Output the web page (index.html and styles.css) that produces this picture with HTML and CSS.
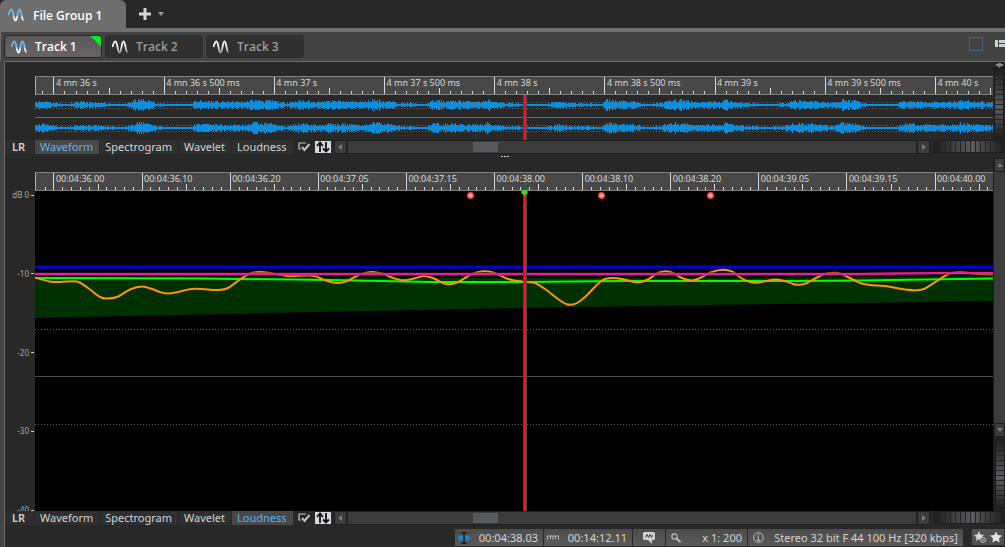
FILE: index.html
```html
<!DOCTYPE html>
<html lang="en">
<head>
    <meta charset="UTF-8">
    <meta name="viewport" content="width=device-width, initial-scale=1.0">
    <title>File Group 1</title>
    <link rel="stylesheet" href="styles.css">
</head>
<body>
    <!-- shared icons -->
    <svg class="icon-defs" aria-hidden="true">
        <linearGradient id="waveActive" gradientUnits="userSpaceOnUse" x1="0" y1="0" x2="0" y2="14">
            <stop offset="0.5" stop-color="#6cbcf0"/>
            <stop offset="0.7" stop-color="#ffffff"/>
        </linearGradient>
        <linearGradient id="waveIdle" gradientUnits="userSpaceOnUse" x1="0" y1="0" x2="0" y2="14">
            <stop offset="0.4" stop-color="#f4f4f4"/>
            <stop offset="1" stop-color="#909090"/>
        </linearGradient>
        <symbol id="icon-wave" viewBox="0 0 16 14">
            <path d="M0.5 7C1.500 3 2.500 1.500 3.500 1.500C5.500 1.500 5.500 12.500 7.500 12.500C9.500 12.500 9.500 1.500 11.500 1.500C13.500 1.500 13.500 12 15.500 12" fill="none" stroke-width="1.8"/>
        </symbol>
        <symbol id="icon-check" viewBox="0 0 14 12">
            <path d="M9 2H2V8H4" fill="none" stroke="#c4c4c4" stroke-width="1.2"/>
            <path d="M5 6L7.500 9L12.500 3" fill="none" stroke="#c4c4c4" stroke-width="2"/>
        </symbol>
        <symbol id="icon-swap" viewBox="0 0 16 12">
            <path d="M5 11V2M2 5L5 1.500L8 5" fill="none" stroke="#111" stroke-width="1.8"/>
            <path d="M11 1V10M8 7.500L11 10.500L14 7.500" fill="none" stroke="#111" stroke-width="1.8"/>
        </symbol>
    </svg>

    <header class="group-bar">
        <button class="group-tab" type="button">
            <svg class="wave-icon"><use href="#icon-wave"/></svg>
            File Group 1
        </button>
        <button class="add-button" type="button" aria-label="Add">
            <svg width="12" height="12" viewBox="0 0 12 12"><path d="M6 0V12M0 6H12" stroke="#d4d4d4" stroke-width="3"/></svg>
        </button>
        <button class="add-menu" type="button" aria-label="Add menu">
            <svg width="6" height="4" viewBox="0 0 6 4"><path d="M0 0H6L3 4Z" fill="#9a9a9a"/></svg>
        </button>
    </header>

    <nav class="track-bar">
        <button class="track-tab active" type="button"><svg class="wave-icon"><use href="#icon-wave"/></svg>Track 1</button>
        <button class="track-tab" type="button"><svg class="wave-icon"><use href="#icon-wave"/></svg>Track 2</button>
        <button class="track-tab" type="button"><svg class="wave-icon"><use href="#icon-wave"/></svg>Track 3</button>
        <div class="track-tools">
            <button class="square-button" type="button" aria-label="Maximize"></button>
            <button type="button" aria-label="Layout">
                <svg width="10" height="8" viewBox="0 0 10 8"><path d="M0 0H3V7H0ZM4 0H10V3H4ZM4 4H10V7H4Z" fill="#ccd0d6"/></svg>
            </button>
        </div>
    </nav>

    <main class="editor">
        <section class="overview">
            <div class="overview-view">
                <div class="ruler ruler-seconds" id="overviewRuler"></div>
                <div class="wave">
                    <svg class="plot" viewBox="0 0 958 45" preserveAspectRatio="none">
                        <path class="wave-guide" d="M0 7.500H958M0 13.500H958M0 30.500H958M0 36.500H958"/>
                        <path class="wave-divider" d="M0 22.500H958"/>
                        <path class="wave-line" id="waveLeft"/>
                        <path class="wave-line" id="waveRight"/>
                    </svg>
                    <div class="playhead"></div>
                </div>
            </div>
            <div class="side">
                <button class="side-star" type="button" aria-label="Options">
                    <svg width="7" height="5" viewBox="0 0 7 5"><path d="M2 0H5V1H7V3H5L3.500 5L2 3H0V1H2Z" fill="#8c8c8c"/></svg>
                </button>
                <input class="wheel-v" type="range" aria-label="Overview vertical zoom">
            </div>
        </section>

        <div class="view-bar">
            <span class="channels">LR</span>
            <button class="view-tab active" type="button">Waveform</button>
            <button class="view-tab" type="button">Spectrogram</button>
            <button class="view-tab" type="button">Wavelet</button>
            <button class="view-tab" type="button">Loudness</button>
            <button class="check-button" type="button" aria-label="Options"><svg width="14" height="12"><use href="#icon-check"/></svg></button>
            <button class="swap-button" type="button" aria-label="Swap"><svg width="16" height="12"><use href="#icon-swap"/></svg></button>
            <button class="scroll-button" type="button" aria-label="Scroll left"><svg width="4" height="6" viewBox="0 0 4 6"><path d="M4 0V6L0 3Z"/></svg></button>
            <div class="scroll-track"><div class="scroll-thumb"></div></div>
            <button class="scroll-button" type="button" aria-label="Scroll right"><svg width="4" height="6" viewBox="0 0 4 6"><path d="M0 0V6L4 3Z"/></svg></button>
            <input class="wheel-h" type="range" aria-label="Overview zoom">
        </div>

        <div class="splitter"><i></i><i></i><i></i></div>

        <section class="detail">
            <div class="axis">
                <span>dB 0</span>
                <span>-10</span>
                <span>-20</span>
                <span>-30</span>
                <span>-40</span>
            </div>
            <div class="detail-view">
                <div class="ruler ruler-frames" id="detailRuler"></div>
                <div class="chart">
                    <svg class="plot" viewBox="0 0 958 320" preserveAspectRatio="none">
                        <path class="range-fill" d="M0 86L165 86L295 86.500L490 87H700L958 85V110L635 114.500L490 117L305 120.500L0 127Z"/>
                        <path class="grid-dots" d="M0 138.500H958M0 233.500H958"/>
                        <path class="grid-line" d="M0 185.500H958"/>
                        <path class="line-glow-blue" d="M0 76H958"/>
                        <path class="line-blue" d="M0 76H958"/>
                        <path class="line-green" d="M0 87L165 87.500L295 89L395 91H490L585 90H765L825 89.500L958 87.500"/>
                        <path class="line-orange" id="loudness"/>
                        <path class="line-glow-pink" d="M0 83H825L900 82H958"/>
                        <path class="line-pink" d="M0 83H825L900 82H958"/>
                    </svg>
                    <div class="playhead"></div>
                    <svg class="play-marker" viewBox="0 0 7 7"><path d="M0.5 0H6.500V4H5L3.500 6.500L2 4H0.500Z" fill="#3fdc1c"/></svg>
                    <i class="marker" style="left: 45.4%"></i>
                    <i class="marker" style="left: 59.1%"></i>
                    <i class="marker" style="left: 70.5%"></i>
                </div>
            </div>
            <div class="side side-scroll">
                <button class="scroll-button-v" type="button" aria-label="Scroll up"><svg width="6" height="4" viewBox="0 0 6 4"><path d="M0 4H6L3 0Z"/></svg></button>
                <div class="scroll-track-v"></div>
                <button class="scroll-button-v" type="button" aria-label="Scroll down"><svg width="6" height="4" viewBox="0 0 6 4"><path d="M0 0H6L3 4Z"/></svg></button>
                <input class="wheel-v" type="range" aria-label="Vertical zoom">
            </div>
        </section>

        <div class="view-bar">
            <span class="channels">LR</span>
            <button class="view-tab" type="button">Waveform</button>
            <button class="view-tab" type="button">Spectrogram</button>
            <button class="view-tab" type="button">Wavelet</button>
            <button class="view-tab active" type="button">Loudness</button>
            <button class="check-button" type="button" aria-label="Options"><svg width="14" height="12"><use href="#icon-check"/></svg></button>
            <button class="swap-button" type="button" aria-label="Swap"><svg width="16" height="12"><use href="#icon-swap"/></svg></button>
            <button class="scroll-button" type="button" aria-label="Scroll left"><svg width="4" height="6" viewBox="0 0 4 6"><path d="M4 0V6L0 3Z"/></svg></button>
            <div class="scroll-track"><div class="scroll-thumb"></div></div>
            <button class="scroll-button" type="button" aria-label="Scroll right"><svg width="4" height="6" viewBox="0 0 4 6"><path d="M0 0V6L4 3Z"/></svg></button>
            <input class="wheel-h" type="range" aria-label="Zoom">
        </div>

        <footer class="status-bar">
            <button class="status-cell cell-time" type="button">
                <svg width="12" height="12" viewBox="0 0 12 12"><path d="M0 6A3 3 0 0 1 5 4V8A3 3 0 0 1 0 6M12 6A3 3 0 0 0 7 4V8A3 3 0 0 0 12 6" fill="#1787c9"/><path d="M3 0.500H5L6 1L7 0.500H9M6 1V11M3 11.500H5L6 11L7 11.500H9" fill="none" stroke="#1c1c1c" stroke-width="1.500"/></svg>
                <span>00:04:38.03</span>
            </button>
            <button class="status-cell cell-time" type="button">
                <svg width="12" height="6" viewBox="0 0 12 6"><path d="M0 1H12M0.500 1V5M3.500 1V4M6 1V5M8.500 1V4M11.500 1V5" fill="none" stroke="#b8b8b8"/></svg>
                <span>00:14:12.11</span>
            </button>
            <button class="status-cell cell-marker" type="button" aria-label="Markers">
                <svg width="12" height="12" viewBox="0 0 12 12"><path d="M1 0H11L12 1V7L11 8H9V12L5 8H1L0 7V1Z" fill="#d0d0d0"/><path d="M2.500 5.500L4 2.500L5.500 5.500L7 2.500L8.500 5.500L9.500 3" fill="none" stroke="#444"/></svg>
            </button>
            <button class="status-cell cell-zoom" type="button">
                <svg width="10" height="10" viewBox="0 0 10 10"><circle cx="3.500" cy="3.500" r="2.700" fill="none" stroke="#c0c0c0" stroke-width="1.200"/><path d="M5.500 5.500L9.500 9" stroke="#c0c0c0" stroke-width="1.800"/></svg>
                <span>x 1: 200</span>
            </button>
            <button class="status-cell cell-format" type="button">
                <svg width="11" height="11" viewBox="0 0 11 11"><circle cx="5.500" cy="5.500" r="4.800" fill="none" stroke="#c0c0c0"/><path d="M5.500 2V3.500M4.500 5H5.500V8.500M4 8.500H7" fill="none" stroke="#c0c0c0"/></svg>
                <span>Stereo 32 bit F 44 100 Hz [320 kbps]</span>
            </button>
            <div class="favorites">
                <button type="button" aria-label="Clear favorite">
                    <svg width="12" height="12" viewBox="0 0 12 12"><path d="M5 0L6.500 3.500L10 4L7.500 6.500L8 10L5 8L2 10L2.500 6.500L0 4L3.500 3.500Z" fill="#d8d8d8"/><circle cx="9" cy="9" r="2.500" fill="#555" stroke="#bbb"/><path d="M7.500 10.500L10.500 7.500" stroke="#bbb"/></svg>
                </button>
                <button type="button" aria-label="Favorite">
                    <svg width="12" height="12" viewBox="0 0 12 12"><path d="M6 0.500L7.700 4L12 4.500L9 7.500L9.700 11.500L6 9.500L2.300 11.500L3 7.500L0 4.500L4.300 4Z" fill="#e0e0e0"/></svg>
                </button>
            </div>
        </footer>
    </main>

    <script src="script.js"></script>
</body>
</html>
```
FILE: styles.css
```css
* {
    box-sizing: border-box;
}

body {
    margin: 0;
    min-height: 100vh;
    display: flex;
    flex-direction: column;
    background: #434343;
    color: #d4d4d4;
    font-family: "Noto Sans", "Open Sans", sans-serif;
    font-size: 11px;
    overflow: hidden;
}

button {
    margin: 0;
    padding: 0;
    border: none;
    background: none;
    color: inherit;
    font: inherit;
    display: flex;
    align-items: center;
    justify-content: center;
    white-space: nowrap;
}

svg {
    display: block;
    flex: none;
}

.icon-defs {
    position: absolute;
    width: 0;
    height: 0;
}

.wave-icon {
    width: 16px;
    height: 14px;
    stroke: url(#waveIdle);
}

/* file group tabs */
.group-bar {
    height: 32px;
    display: flex;
    align-items: center;
    background: #282828;
    border-bottom: 4px solid #6e6e6e;
}

.group-tab {
    height: 28px;
    width: 126px;
    padding: 2px 0 0 8px;
    gap: 9px;
    justify-content: flex-start;
    background: #6e6e6e;
    border-radius: 6px 6px 0 0;
    color: #ffffff;
    font-family: "Open Sans", sans-serif;
    font-size: 12px;
    font-weight: 600;
}

.add-button {
    margin-left: 13px;
}

.add-menu {
    margin-left: 7px;
}

/* tracks */
.track-bar {
    height: 29px;
    padding: 3px 0 3px 3px;
    display: flex;
    align-items: center;
    gap: 3px;
    border-left: 1px solid #6e6e6e;
}

.track-tab {
    width: 98px;
    height: 23px;
    padding-left: 7px;
    gap: 8px;
    justify-content: flex-start;
    background: #303030;
    border-radius: 3px;
    color: #9c9c9c;
    font-family: "Open Sans", sans-serif;
    font-size: 12px;
    font-weight: 600;
}

.track-tab.active {
    border: 1px solid #242424;
    padding-left: 6px;
    background: linear-gradient(225deg, #00ee22 7px, transparent 8px), linear-gradient(#5c5859, #686465);
    color: #ffffff;
}

.group-tab .wave-icon,
.track-tab.active .wave-icon {
    stroke: url(#waveActive);
}

.track-tools {
    display: flex;
    align-items: center;
    gap: 12px;
    height: 23px;
    margin-left: auto;
    padding-bottom: 5px;
}

.square-button {
    width: 14px;
    height: 14px;
    border: 1px solid #4c6878;
}

/* editor */
.editor {
    flex: 1;
    margin-left: 4px;
    display: flex;
    flex-direction: column;
    background: #282828;
    border-top: 1px solid #6e6e6e;
    border-left: 1px solid #6e6e6e;
}

.overview {
    height: 78px;
    display: flex;
    padding-left: 30px;
}

.overview-view,
.detail-view {
    flex: 1;
    min-width: 0;
    display: flex;
    flex-direction: column;
    padding-top: 14px;
}

.ruler {
    position: relative;
    height: 19px;
    display: grid;
    flex: none;
    background: #484848;
    border: 1px solid #808080;
    border-right: none;
    border-left-color: #b0b0b0;
    color: #d8d8d8;
    font-size: 9px;
    line-height: 12px;
    white-space: nowrap;
    overflow: hidden;
}

.ruler-seconds {
    grid-template-columns: 180fr repeat(8, 1103fr) 576fr;
}

.ruler-frames {
    grid-template-columns: 180fr repeat(10, 882fr) 580fr;
}

.ruler span {
    min-width: 0;
    padding-left: 2px;
}

.ruler svg {
    position: absolute;
    inset: 0;
    width: 100%;
    height: 100%;
}

.ruler path {
    stroke: #d8d8d8;
    stroke-width: 1px;
    vector-effect: non-scaling-stroke;
    shape-rendering: crispEdges;
}

.wave,
.chart {
    position: relative;
    flex: 1;
    min-height: 0;
}

.plot {
    position: absolute;
    inset: 0;
    width: 100%;
    height: 100%;
}

.plot path {
    fill: none;
    stroke-width: 1px;
}

.plot .wave-guide {
    stroke: #6a6a6a;
    stroke-dasharray: 1 2;
}

.plot .wave-divider {
    stroke: #6e6e6e;
}

.plot .wave-line {
    stroke: #0c8edc;
    shape-rendering: crispEdges;
}

.playhead {
    position: absolute;
    top: 0;
    bottom: 0;
    left: 50.9%;
    width: 4px;
    background: #ff0a22;
    border: solid #4a4a4a;
    border-width: 0 1px;
}

.side {
    width: 12px;
    display: flex;
    flex-direction: column;
    align-items: center;
    background: #242424;
}

.side-star {
    height: 6px;
    flex: none;
}

.side-scroll {
    border-left: 1px solid #1c1c1c;
}

.wheel-v,
.wheel-h {
    appearance: none;
    margin: 0;
    border: 1px solid #1c1c1c;
}

.wheel-v {
    width: 10px;
    height: 70px;
    flex: none;
    writing-mode: vertical-lr;
    background:
        repeating-linear-gradient(#242424 0 1px, transparent 1px 5px),
        linear-gradient(#202020, #5a5b5e 55%, #202020);
}

.wheel-h {
    width: 70px;
    height: 13px;
    flex: none;
    margin-left: 3px;
    background:
        repeating-linear-gradient(90deg, #242424 0 1px, transparent 1px 5px),
        linear-gradient(90deg, #202020, #5a5b5e 55%, #202020);
}

.wheel-v::-webkit-slider-thumb,
.wheel-h::-webkit-slider-thumb {
    appearance: none;
    width: 1px;
    height: 1px;
}

/* view tabs and horizontal scroll */
.view-bar {
    height: 14px;
    display: flex;
    flex: none;
    gap: 1px;
    padding-right: 1px;
}

.channels {
    width: 29px;
    padding-left: 7px;
    font-weight: 600;
    line-height: 14px;
    background: #2d2d2d;
}

.view-tab {
    padding: 0 6px 0 5px;
    background: #2f2f2f;
    line-height: 14px;
}

.view-tab.active {
    background: #484848;
    color: #5cb4ee;
}

.check-button {
    width: 20px;
}

.swap-button {
    width: 16px;
    height: 12px;
    margin: 1px 2px 0 0;
    background: #d4d8dc;
}

.scroll-button,
.scroll-button-v {
    background: #3c3c3c;
    border: 1px solid #1e1e1e;
    flex: none;
}

.scroll-button {
    width: 13px;
    height: 14px;
}

.scroll-button svg,
.scroll-button-v svg {
    fill: #7c7c7c;
}

.scroll-track {
    flex: 1;
    height: 14px;
    padding: 1px 0;
    background: #3c3c3c;
    border: solid #1e1e1e;
    border-width: 1px 0;
}

.scroll-thumb {
    width: 25px;
    height: 10px;
    margin-left: 22%;
    background: #58595d;
}

.splitter {
    height: 4px;
    flex: none;
    display: flex;
    align-items: center;
    justify-content: center;
    gap: 1px;
}

.splitter i {
    width: 2px;
    height: 1px;
    background: #d8d8d8;
}

/* loudness chart */
.detail {
    flex: 1;
    display: flex;
    min-height: 0;
    overflow: hidden;
}

.axis {
    width: 30px;
    margin-bottom: -4px;
    padding-top: 32px;
    display: flex;
    flex-direction: column;
    justify-content: space-between;
    color: #a8a8a8;
    font-size: 8px;
    line-height: 10px;
}

.axis span {
    display: flex;
    align-items: center;
    justify-content: flex-end;
    gap: 2px;
    padding-right: 1px;
}

.axis span::after {
    content: "";
    width: 3px;
    height: 1px;
    background: #d0d0d0;
}

.chart {
    background: #000000;
}

.plot .range-fill {
    fill: #003000;
}

.plot .grid-dots {
    stroke: #48605a;
    stroke-dasharray: 1 2;
}

.plot .grid-line {
    stroke: #505050;
}

.plot .line-glow-blue {
    stroke: #000070;
    stroke-width: 4px;
}

.plot .line-blue {
    stroke: #0000e8;
    stroke-width: 2px;
}

.plot .line-green {
    stroke: #00ff00;
    stroke-width: 2px;
}

.plot .line-orange {
    stroke: #ff9500;
    stroke-width: 2px;
}

.plot .line-glow-pink {
    stroke: #60104a;
    stroke-width: 3px;
}

.plot .line-pink {
    stroke: #e81ca0;
    stroke-width: 2px;
}

.marker {
    position: absolute;
    top: 1px;
    width: 7px;
    height: 7px;
    margin-left: -3px;
    border-radius: 50%;
    background: radial-gradient(#ffc8c8, #e02020 80%);
}

.play-marker {
    position: absolute;
    top: -1px;
    left: 50.9%;
    width: 7px;
    height: 7px;
    margin-left: -2px;
}

.scroll-button-v {
    width: 11px;
    height: 14px;
}

.scroll-track-v {
    flex: 1;
    width: 11px;
    background: #3c3c3c;
}

.side-scroll .wheel-v {
    margin: 2px 0;
}

/* status bar */
.status-bar {
    height: 22px;
    flex: none;
    display: flex;
    justify-content: flex-end;
    gap: 1px;
    padding: 4px 1px 1px 0;
}

.status-cell {
    height: 17px;
    padding: 0 5px 0 3px;
    justify-content: space-between;
    background: linear-gradient(#4c4c4c, #5a5a5a);
}

.cell-time {
    width: 88px;
}

.cell-marker {
    width: 32px;
    padding: 0 10px;
}

.cell-zoom {
    width: 81px;
    padding-left: 5px;
}

.cell-format {
    width: 215px;
    padding-left: 5px;
}

.favorites {
    display: flex;
    margin-left: 8px;
}

.favorites button {
    width: 16px;
    height: 16px;
    background: #505050;
}
```
FILE: script.js
```javascript
const overviewLabels = ['4 mn 36 s', '4 mn 36 s 500 ms', '4 mn 37 s', '4 mn 37 s 500 ms', '4 mn 38 s',
    '4 mn 38 s 500 ms', '4 mn 39 s', '4 mn 39 s 500 ms', '4 mn 40 s'];
const detailLabels = ['00:04:36.00', '00:04:36.10', '00:04:36.20', '00:04:37.05', '00:04:37.15', '00:04:38.00',
    '00:04:38.10', '00:04:38.20', '00:04:39.05', '00:04:39.15', '00:04:40.00'];

// x, half height of the waveform envelope
const envelope = [[0, 3], [10, 4], [20, 2], [33, 1], [43, 3], [65, 2], [88, 1], [96, 3], [101, 5], [108, 5],
    [115, 4], [122, 2], [130, 1], [155, 1], [160, 4], [180, 3], [212, 3], [218, 5], [235, 4], [250, 2], [265, 4],
    [285, 3], [295, 4], [330, 3], [338, 5], [350, 4], [365, 2], [390, 1], [397, 4], [415, 4], [449, 3], [452, 6],
    [456, 3], [470, 2], [495, 1], [510, 1], [522, 3], [535, 2], [567, 1], [571, 5], [585, 4], [600, 3], [610, 1],
    [625, 2], [640, 5], [655, 4], [661, 3], [688, 3], [690, 6], [693, 4], [710, 2], [735, 1], [750, 2], [757, 4],
    [775, 4], [795, 2], [803, 3], [807, 5], [820, 4], [832, 1], [860, 1], [868, 4], [890, 3], [922, 3], [925, 6],
    [928, 4], [945, 3], [958, 2]];

const loudness = [[0, 86.5], [15, 90.5], [25, 91], [42, 90.5], [53, 97], [65, 106], [72, 107.5], [82, 106],
    [95, 98.5], [107, 95.5], [117, 98], [125, 101], [133, 102.5], [143, 101], [157, 98], [170, 98.3], [183, 99],
    [193, 97], [205, 88.5], [215, 82.5], [225, 81], [235, 82], [252, 85], [270, 84.5], [280, 85], [292, 90],
    [303, 92], [312, 90], [325, 83.5], [336, 81], [347, 82.5], [357, 86.5], [368, 89.3], [379, 87.5], [389, 85],
    [399, 87.5], [408, 92], [414, 93.3], [422, 91.5], [437, 83], [448, 80.3], [458, 81.5], [473, 88], [483, 90],
    [492, 91], [500, 92], [510, 98], [523, 108], [531, 113], [536, 113.8], [542, 112], [550, 106], [565, 91],
    [572, 87.5], [578, 87], [587, 88], [597, 90.5], [604, 91.2], [612, 89], [623, 82], [631, 80.3], [638, 82],
    [647, 87], [656, 89.5], [664, 87.5], [677, 81], [688, 78.8], [697, 80.5], [707, 87.5], [715, 91], [722, 91.7],
    [731, 90], [740, 88.5], [750, 90], [758, 93], [764, 93.8], [772, 92], [787, 84], [801, 81.7], [811, 85],
    [825, 92], [835, 94], [850, 95], [870, 98.5], [881, 99.3], [890, 97.5], [905, 88], [915, 82.5], [926, 81],
    [937, 82.5], [950, 83.3], [958, 83.3]];

function buildRuler(id, labels, step) {
    const ruler = document.getElementById(id);
    let html = '<span></span>';
    for (const label of labels) {
        html += '<span>' + label + '</span>';
    }
    let d = '';
    for (let i = -1; 18 + i * step / 10 < 958; i++) {
        const x = 18 + i * step / 10;
        let top = 14;
        if (i % 10 === 0) top = 0;
        else if (i % 5 === 0) top = 11;
        d += `M${x} ${top}V17`;
    }
    ruler.innerHTML = html + `<svg viewBox="0 0 958 17" preserveAspectRatio="none"><path d="${d}"/></svg>`;
}

function heightAt(x) {
    let i = 1;
    while (envelope[i][0] < x) i++;
    const [x0, h0] = envelope[i - 1];
    const [x1, h1] = envelope[i];
    return h0 + (h1 - h0) * (x - x0) / (x1 - x0);
}

function drawWave(id, center, seed) {
    let d = '';
    for (let x = 0; x < 958; x++) {
        seed = (seed * 16807) % 2147483647;
        const h = Math.max(1, Math.round(heightAt(x) * (0.5 + 0.8 * seed / 2147483647)));
        d += `M${x + 0.5} ${center - h}V${center + h}`;
    }
    document.getElementById(id).setAttribute('d', d);
}

// smooth curve through the points
function drawCurve(id, p) {
    let d = `M${p[0]}`;
    for (let i = 0; i < p.length - 1; i++) {
        const a = p[i - 1] || p[i];
        const b = p[i];
        const c = p[i + 1];
        const e = p[i + 2] || c;
        d += `C${b[0] + (c[0] - a[0]) / 6} ${b[1] + (c[1] - a[1]) / 6} ${c[0] - (e[0] - b[0]) / 6} ${c[1] - (e[1] - b[1]) / 6} ${c}`;
    }
    document.getElementById(id).setAttribute('d', d);
}

buildRuler('overviewRuler', overviewLabels, 110.3);
buildRuler('detailRuler', detailLabels, 88.2);
drawWave('waveLeft', 10, 11);
drawWave('waveRight', 33, 97);
drawCurve('loudness', loudness);
```
